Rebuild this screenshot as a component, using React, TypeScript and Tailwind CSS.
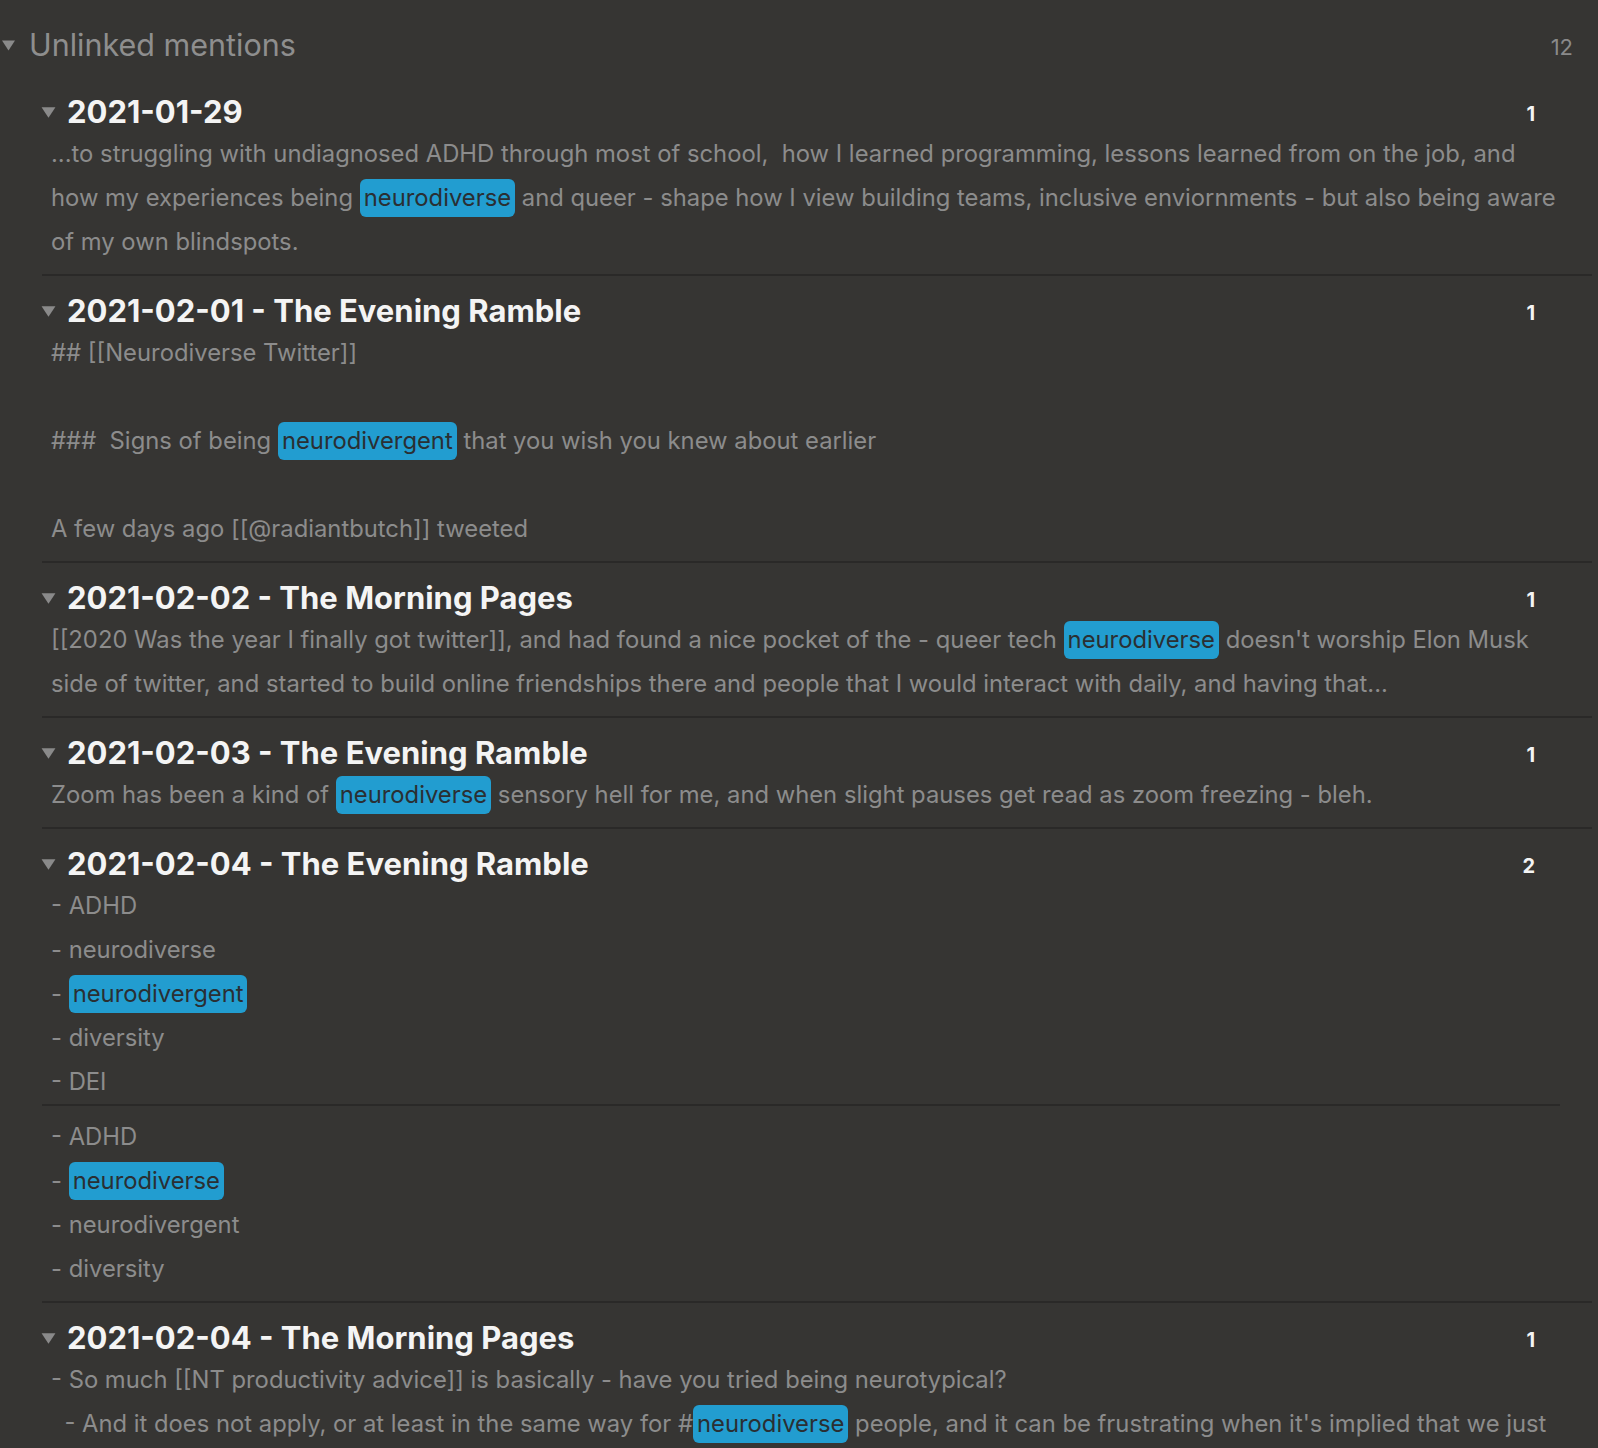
import type { ReactNode } from 'react';

const Hl = ({ children }: { children: ReactNode }) => (
  <span className="inline-block rounded-[6px] bg-[#229dd0] px-[4px] leading-[38px] text-[#2a2f33]">{children}</span>
);

function Caret({ className }: { className: string }) {
  return (
    <svg viewBox="0 0 14 11" className={className} fill="#8a8a8a">
      <path d="M0.5 0.5 L13.5 0.5 L7 10.5 Z" />
    </svg>
  );
}

type Entry = {
  title: string;
  count: number;
  groups: ReactNode[][];
};

const entries: Entry[] = [
  {
    title: '2021-01-29',
    count: 1,
    groups: [
      [
        '...to struggling with undiagnosed ADHD through most of school,  how I learned programming, lessons learned from on the job, and',
        <>how my experiences being <Hl>neurodiverse</Hl> and queer - shape how I view building teams, inclusive enviornments - but also being aware</>,
        'of my own blindspots.',
      ],
    ],
  },
  {
    title: '2021-02-01 - The Evening Ramble',
    count: 1,
    groups: [
      [
        '## [[Neurodiverse Twitter]]',
        '',
        <>###  Signs of being <Hl>neurodivergent</Hl> that you wish you knew about earlier</>,
        '',
        'A few days ago [[@radiantbutch]] tweeted',
      ],
    ],
  },
  {
    title: '2021-02-02 - The Morning Pages',
    count: 1,
    groups: [
      [
        <>[[2020 Was the year I finally got twitter]], and had found a nice pocket of the - queer tech <Hl>neurodiverse</Hl> doesn't worship Elon Musk</>,
        'side of twitter, and started to build online friendships there and people that I would interact with daily, and having that...',
      ],
    ],
  },
  {
    title: '2021-02-03 - The Evening Ramble',
    count: 1,
    groups: [
      [
        <>Zoom has been a kind of <Hl>neurodiverse</Hl> sensory hell for me, and when slight pauses get read as zoom freezing - bleh.</>,
      ],
    ],
  },
  {
    title: '2021-02-04 - The Evening Ramble',
    count: 2,
    groups: [
      ['- ADHD', '- neurodiverse', <>- <Hl>neurodivergent</Hl></>, '- diversity', '- DEI'],
      ['- ADHD', <>- <Hl>neurodiverse</Hl></>, '- neurodivergent', '- diversity'],
    ],
  },
  {
    title: '2021-02-04 - The Morning Pages',
    count: 1,
    groups: [
      [
        '- So much [[NT productivity advice]] is basically - have you tried being neurotypical?',
        <>  - And it does not apply, or at least in the same way for #<Hl>neurodiverse</Hl> people, and it can be frustrating when it's implied that we just</>,
      ],
    ],
  },
];

export default function App() {
  return (
    <main className="h-screen w-full overflow-hidden bg-[#363533] font-['Inter','Noto_Sans',sans-serif]">
      {/* Section header */}
      <div className="mt-[27px] flex h-[36px] items-center pr-[25px]">
        <Caret className="ml-[1px] h-[11px] w-[15px]" />
        <span className="ml-[13px] text-[30.5px] leading-[36px] text-[#8e8e8e]">Unlinked mentions</span>
        <span className="ml-auto mt-[4px] text-[22px] text-[#8a8a8a]">12</span>
      </div>

      <div className="mt-[14px] pl-[42px] pr-[6px]">
        {entries.map((e, i) => (
          <div key={i} className={`pt-[15px] ${i < entries.length - 1 ? 'border-b-2 border-[#2a2928] pb-[10px]' : ''}`}>
            <div className="flex h-[40px] items-center pr-[57px]">
              <Caret className="-ml-[1px] h-[13px] w-[15px]" />
              <span className="ml-[11px] text-[31px] font-bold leading-[40px] text-[#f4f4f4]">{e.title}</span>
              <span className="ml-auto mt-[4px] text-[20px] font-bold text-[#f4f4f4]">{e.count}</span>
            </div>
            {e.groups.map((g, gi) => (
              <div
                key={gi}
                className={`pl-[9px] text-[23.8px] leading-[44px] text-[#8c8c8c] ${gi > 0 ? 'mt-[5px]' : ''} ${
                  gi < e.groups.length - 1 ? 'mb-[9px] mr-[32px] border-b-2 border-[#2a2928]' : ''
                }`}
              >
                {g.map((line, li) => (
                  <div key={li} className="h-[44px] whitespace-pre">
                    {line}
                  </div>
                ))}
              </div>
            ))}
          </div>
        ))}
      </div>
    </main>
  );
}
